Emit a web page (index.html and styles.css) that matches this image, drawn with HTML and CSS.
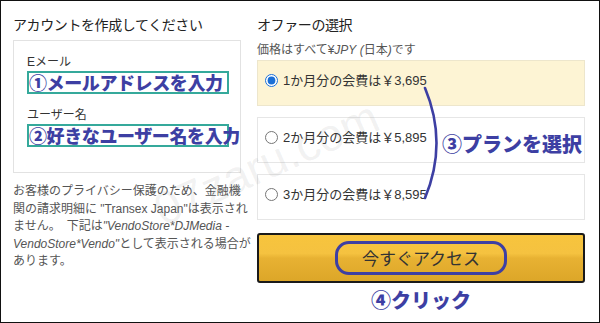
FILE: index.html
```html
<!DOCTYPE html>
<html lang="ja">
<head>
<meta charset="UTF-8" />
<meta name="viewport" content="width=device-width, initial-scale=1" />
<title>アカウント作成</title>
<link rel="stylesheet" href="styles.css">
</head>
<body>
<div class="frame">
  <!-- 左：アカウント -->
  <section class="col-left">
    <h2 class="title">アカウントを作成してください</h2>
    <div class="account-box">
      <div class="label">Eメール</div>
      <div class="note-box">①メールアドレスを入力</div>
      <div class="label label-second">ユーザー名</div>
      <div class="note-box">②好きなユーザー名を入力</div>
    </div>
    <p class="privacy">
      お客様のプライバシー保護のため、金融機<br>
      関の請求明細に "Transex Japan"は表示され<br>
      ません。　下記は<i>"VendoStore*DJMedia -<br>
      VendoStore*Vendo"</i>として表示される場合が<br>
      あります。
    </p>
  </section>

  <!-- 右：オファー -->
  <section class="col-right">
    <h2 class="title">オファーの選択</h2>
    <div class="sub">価格はすべて¥<i>JPY</i> <i>(</i>日本<i>)</i>です</div>
    <div class="plans">
      <label class="plan selected"><input type="radio" name="plan" checked><span>1か月分の会費は￥3,695</span></label>
      <label class="plan"><input type="radio" name="plan"><span>2か月分の会費は￥5,895</span></label>
      <label class="plan"><input type="radio" name="plan"><span>3か月分の会費は￥8,595</span></label>
    </div>
    <button class="btn-access"><span class="ring">今すぐアクセス</span></button>
    <div class="note-click">④クリック</div>
  </section>

  <!-- 注釈 -->
  <svg class="bracket" width="24" height="118" viewBox="0 0 24 118">
    <path d="M7 4 Q30 59 7 114" fill="none" stroke="#3d3fa3" stroke-width="2.6" stroke-linecap="round"/>
  </svg>
  <div class="note-plan">③プランを選択</div>
  <div class="watermark">07zaru.com</div>
</div>
</body>
</html>
```

FILE: styles.css
```css
body {
  margin: 0;
  background: #fff;
  font-family: "Liberation Sans", "Noto Sans CJK JP", sans-serif;
  color: #333;
}
.frame {
  position: relative;
  width: 600px;
  height: 323px;
  box-sizing: border-box;
  border: 1px solid #111;
  padding: 13px 0 0 12px;
  display: flex;
  gap: 16px;
  overflow: hidden;
}
.title {
  margin: 0;
  font-size: 14px;
  font-weight: normal;
  line-height: 22px;
  color: #222;
  letter-spacing: -0.4px;
  white-space: nowrap;
}

/* 左カラム */
.col-left {
  width: 228px;
}
.account-box {
  margin-top: 4px;
  border: 1px solid #e2e2e2;
  padding: 13px 0 25px 13px;
}
.label {
  font-size: 12px;
  line-height: 16px;
  color: #333;
}
.label-second {
  margin-top: 13px;
}
.note-box {
  margin-top: 1px;
  width: 202px;
  height: 23px;
  box-sizing: border-box;
  border: 2px solid #35a99b;
  font-family: "Noto Sans CJK JP", sans-serif;
  font-weight: 900;
  font-size: 18px;
  line-height: 19px;
  color: #3d3fa3;
  white-space: nowrap;
  letter-spacing: -0.4px;
}
.privacy {
  margin: 10px 0 0 0;
  font-size: 12px;
  line-height: 17.5px;
  color: #555;
  white-space: nowrap;
}

/* 右カラム */
.col-right {
  width: 328px;
}
.sub {
  margin-top: 6px;
  font-size: 12px;
  line-height: 16px;
  color: #555;
}
.plans {
  margin-top: 2px;
  display: flex;
  flex-direction: column;
  gap: 11px;
}
.plan {
  height: 46px;
  box-sizing: border-box;
  border: 1px solid #e6e6e6;
  padding: 12px 0 0 7px;
  display: flex;
  align-items: flex-start;
  gap: 5px;
  font-size: 13px;
  line-height: 16px;
  color: #333;
  background: #fff;
}
.plan.selected {
  background: #fdf4d4;
  border-color: #ede6cc;
}
.plan input {
  margin: 1px 0 0 0;
  width: 13px;
  height: 13px;
  accent-color: #1a6fd6;
}
.btn-access {
  margin-top: 13px;
  width: 328px;
  height: 50px;
  border: 2px solid #1a1a1a;
  border-radius: 3px;
  background: linear-gradient(#f7c43d 0%, #f5c240 40%, #e8b233 50%, #dca628 100%);
  display: flex;
  justify-content: center;
  align-items: center;
  padding: 0;
  cursor: pointer;
}
.ring {
  display: inline-block;
  border: 3px solid #3d3fa3;
  border-radius: 14px;
  padding: 3px 24px;
  font-family: "Noto Sans CJK JP", sans-serif;
  font-size: 17px;
  line-height: 22px;
  color: #333;
}
.note-click {
  margin-top: 5px;
  text-align: center;
  font-family: "Noto Sans CJK JP", sans-serif;
  font-weight: 900;
  font-size: 20px;
  line-height: 24px;
  color: #3d3fa3;
}

/* 注釈 */
.bracket {
  position: absolute;
  left: 417px;
  top: 83px;
}
.note-plan {
  position: absolute;
  left: 441px;
  top: 130px;
  font-family: "Noto Sans CJK JP", sans-serif;
  font-weight: 900;
  font-size: 20px;
  line-height: 26px;
  color: #3d3fa3;
  white-space: nowrap;
}
.watermark {
  position: absolute;
  left: 145px;
  top: 135px;
  font-family: "Liberation Sans", sans-serif;
  font-size: 46px;
  color: rgba(120, 120, 120, 0.1);
  transform: rotate(-24deg);
  pointer-events: none;
  white-space: nowrap;
}
```
